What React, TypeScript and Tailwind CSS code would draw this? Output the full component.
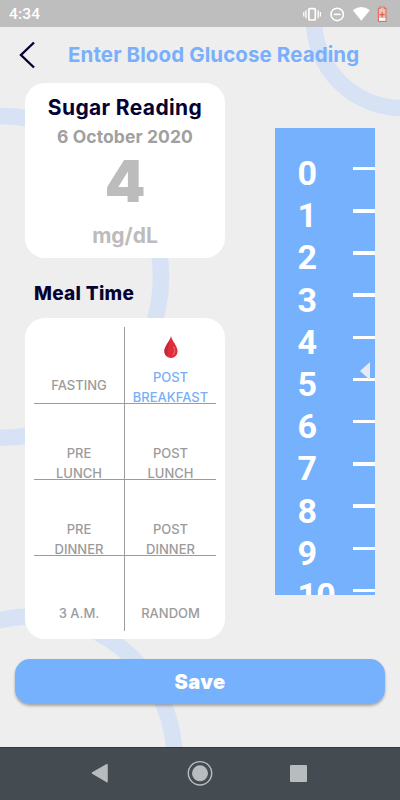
import React from "react";

const numbers = [0, 1, 2, 3, 4, 5, 6, 7, 8, 9, 10];

function Backdrop() {
  return (
    <svg className="absolute inset-0" width="400" height="800" fill="none" stroke="#d7e3f5" strokeWidth="16.5">
      <circle cx="402" cy="20" r="88" />
      <circle cx="0" cy="277" r="161" />
      <circle cx="32" cy="759" r="142.5" />
    </svg>
  );
}

function StatusBar() {
  return (
    <header className="relative flex h-[27px] items-center justify-between bg-[#bebebe] pl-[9px] pr-[12px] text-white">
      <span className="mt-[2px] font-['Roboto'] text-[15.500px] leading-none font-medium tracking-[0.2px]">4:34</span>
      <svg width="86" height="16" viewBox="302 5 86 16" fill="none">
        <g stroke="#fff">
          <rect x="308.9" y="7.6" width="6.4" height="11.4" rx="0.8" strokeWidth="1.7" />
          <path d="M306 9.3v8M303.800 11.100v4.400M318.200 9.300v8M320.400 11.100v4.400" strokeWidth="1.3" />
          <circle cx="337.2" cy="13.4" r="6.2" strokeWidth="1.6" />
          <path d="M333.8 13.4h6.8" strokeWidth="1.6" />
        </g>
        <path d="M352.8 9.2Q361.3 3 369.8 9.2L361.3 19.8Z" fill="#fff" />
        <path d="M378.4 7.3h1.700V6h4.200v1.300h1.700v13h-7.600Z" fill="#dfc6c2" stroke="#e9705c" strokeWidth="1.200" />
        <path d="M379 17h6.400v2.700H379Z" fill="#fff" />
        <path d="M382.200 11.200v5M379.700 13.700h5" stroke="#e65a45" strokeWidth="1.300" />
      </svg>
    </header>
  );
}

function BloodDrop() {
  return (
    <svg className="mb-[4px]" width="16" height="24" viewBox="0 0 16 24">
      <path d="M8 1C7 6 1.400 11 1.400 16.300a6.600 6.600 0 0 0 13.200 0C14.600 11 9 6 8 1Z" fill="#e12c3b" />
      <path d="M7.800 2C7 6.500 1.400 11 1.400 16.300a6.600 6.600 0 0 0 3.600 5.800C3 18 5.500 11 7.800 2Z" fill="#c92435" />
      <path d="M10.700 12c1.500 3 1.500 5.500-.5 7.700" stroke="#f0626c" strokeWidth="1.200" strokeLinecap="round" fill="none" />
    </svg>
  );
}

function Meal({ lines, active, single, className = "" }: { lines: string[]; active?: boolean; single?: string; className?: string }) {
  return (
    <div
      className={`flex h-[76px] flex-col items-center justify-end text-[13px] leading-[20px] font-medium ${active ? "text-[#79aff6]" : "text-[#9b9b9b]"} ${single ?? "pb-0"} ${className}`}
    >
      {active && <BloodDrop />}
      {lines.map((line) => (
        <span key={line} className="translate-y-[4px] whitespace-nowrap">{line}</span>
      ))}
    </div>
  );
}

function Ruler() {
  return (
    <div className="relative mt-[45px] ml-[50px] h-[467px] w-[100px] overflow-hidden bg-[#76b1fd] pt-[24px]">
      {numbers.map((n) => (
        <div key={n} className="flex h-[42.200px] items-center justify-between pl-[22.5px]">
          <span className="font-['Roboto'] text-[34px] leading-none font-bold tracking-[-0.8px] text-white">{n}</span>
          <span className="mb-[9px] h-[3.500px] w-[22px] bg-white" />
        </div>
      ))}
      <svg className="absolute top-[234px] left-[85px]" width="10" height="18" viewBox="0 0 10 18">
        <path d="M0 9 10 0V18Z" fill="#e7ebf1" />
      </svg>
    </div>
  );
}

export default function App() {
  return (
    <div className="relative flex h-[800px] w-[400px] flex-col overflow-hidden bg-[#eee] font-['Inter',sans-serif]">
      <Backdrop />
      <StatusBar />
      <div className="relative flex h-[56px] items-center pl-[19px]">
        <svg width="17" height="28" viewBox="0 0 17 28" fill="none" stroke="#050132" strokeWidth="2.400">
          <path d="M15 1.500 2 14 15 26.500" />
        </svg>
        <h1 className="ml-[32px] text-[20.500px] leading-none font-bold tracking-[0.1px] whitespace-nowrap text-[#79affb]">Enter Blood Glucose Reading</h1>
      </div>
      <main className="relative flex h-[556px] pl-[25px]">
        <div className="flex w-[200px] flex-col">
          <section className="flex h-[175px] flex-col items-center rounded-[20px] bg-white">
            <h2 className="mt-[12px] text-[21px] leading-[26px] font-bold tracking-[0.37px] whitespace-nowrap text-[#050132]">Sugar Reading</h2>
            <p className="mt-[4px] text-[17.500px] leading-[24px] font-bold tracking-[0.1px] whitespace-nowrap text-[#a0a0a0]">6 October 2020</p>
            <p className="mt-[2px] text-[58px] leading-[60px] font-black text-[#bcbcbc]">4</p>
            <p className="mt-[12px] text-[21px] leading-[26px] font-bold text-[#bcbcbc]">mg/dL</p>
          </section>
          <h3 className="mt-[26px] ml-[9px] h-[34px] text-[19px] leading-[20px] font-extrabold tracking-[0.3px] whitespace-nowrap text-[#050132]">Meal Time</h3>
          <section className="h-[321px] rounded-[20px] bg-white px-[9px] pt-[9px]">
            <div className="grid grid-cols-2">
              <div className="border-r border-[#9b9b9b]">
                <Meal lines={["FASTING"]} single="h-[77px]! pb-[12px]" className="border-b border-[#9b9b9b]" />
                <Meal lines={["PRE", "LUNCH"]} className="border-b border-[#9b9b9b]" />
                <Meal lines={["PRE", "DINNER"]} className="border-b border-[#9b9b9b]" />
                <Meal lines={["3 A.M."]} single="h-[75px]! pb-[12px]" />
              </div>
              <div>
                <Meal lines={["POST", "BREAKFAST"]} active single="h-[77px]!" className="border-b border-[#9b9b9b]" />
                <Meal lines={["POST", "LUNCH"]} className="border-b border-[#9b9b9b]" />
                <Meal lines={["POST", "DINNER"]} className="border-b border-[#9b9b9b]" />
                <Meal lines={["RANDOM"]} single="h-[75px]! pb-[12px]" />
              </div>
            </div>
          </section>
        </div>
        <Ruler />
      </main>
      <button className="relative mx-[15px] mt-[20px] h-[45px] rounded-[15px] bg-[#76b1fd] text-[20px] font-black tracking-[0.4px] text-white shadow-[0_2px_3px_rgba(0,0,0,0.3)]">Save</button>
      <nav className="relative mt-auto flex h-[53px] items-center border-t border-[#30383c] bg-[#444c51]">
        <svg width="400" height="30" viewBox="0 759 400 30">
          <path d="M92.500 773 107 764.700V781.700Z" fill="#b7bcbf" stroke="#b7bcbf" strokeWidth="1.500" strokeLinejoin="round" />
          <circle cx="200" cy="773.300" r="11.700" fill="none" stroke="#b7bcbf" strokeWidth="1.400" />
          <circle cx="200" cy="773.300" r="8" fill="#b7bcbf" />
          <rect x="290" y="765" width="17" height="17" rx="1" fill="#b7bcbf" />
        </svg>
      </nav>
    </div>
  );
}
